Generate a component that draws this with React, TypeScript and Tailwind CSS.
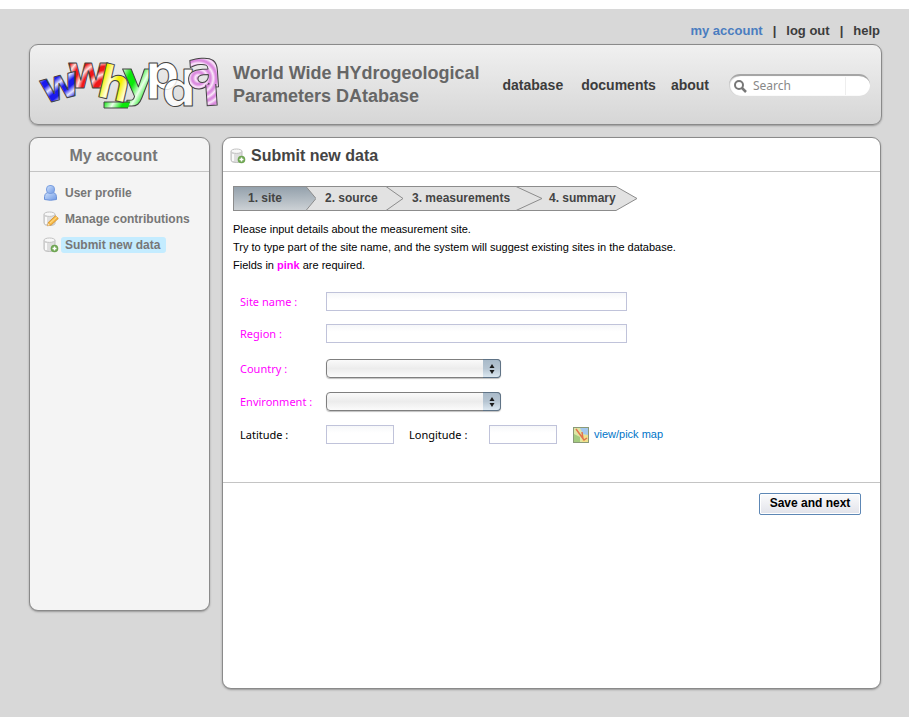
import type { ReactNode } from "react";

const sans = "font-['Liberation_Sans',Arial,sans-serif]";
const humanist = "font-['Noto_Sans','Open_Sans',sans-serif]";

function Logo() {
  const letter = {
    fontFamily: "'DejaVu Sans','Liberation Sans',sans-serif",
    fontWeight: 700,
    stroke: "#444",
    strokeWidth: 1,
    strokeLinejoin: "round" as const,
  };
  return (
    <svg width="182" height="54" viewBox="0 0 182 54" role="img" aria-label="wwhypda" className="shrink-0 overflow-visible">
      <defs>
        <linearGradient id="blue" gradientUnits="userSpaceOnUse" x1="0" y1="0" x2="3" y2="7" spreadMethod="reflect">
          <stop offset="0.3" stopColor="#1a1aee" />
          <stop offset="1" stopColor="#e8e8ff" />
        </linearGradient>
        <radialGradient id="red" gradientUnits="userSpaceOnUse" cx="40" cy="4" r="6" spreadMethod="reflect">
          <stop offset="0.3" stopColor="#f01818" />
          <stop offset="1" stopColor="#ffe4e4" />
        </radialGradient>
        <linearGradient id="yellow" gradientUnits="userSpaceOnUse" x1="0" y1="0" x2="9" y2="1" spreadMethod="reflect">
          <stop offset="0.2" stopColor="#f6f000" />
          <stop offset="1" stopColor="#ffffe0" />
        </linearGradient>
        <linearGradient id="green" gradientUnits="userSpaceOnUse" x1="0" y1="0" x2="11" y2="6" spreadMethod="reflect">
          <stop offset="0.3" stopColor="#0be80b" />
          <stop offset="1" stopColor="#eaffea" />
        </linearGradient>
        <radialGradient id="violet" gradientUnits="userSpaceOnUse" cx="12" cy="-10" r="3" spreadMethod="reflect">
          <stop offset="0.2" stopColor="#dc8ce0" />
          <stop offset="1" stopColor="#fbeafb" />
        </radialGradient>
      </defs>
      <text {...letter} fontSize="46" fill="url(#red)" transform="translate(29 30)">w</text>
      <text {...letter} fontSize="43" fill="url(#blue)" transform="translate(6 46) rotate(-15)">w</text>
      <text {...letter} fontSize="49" fill="url(#green)" transform="translate(84 38)">y</text>
      <path d="M90 50H66V44H92" fill="url(#green)" stroke="#444" />
      <text {...letter} fontSize="46" fill="url(#yellow)" transform="translate(57 38) rotate(13)">h</text>
      <text {...letter} fontSize="48" fill="#fff" transform="translate(107 31)">p</text>
      <text {...letter} fontSize="48" fill="#fff" fillOpacity="0.85" transform="translate(124 48)">d</text>
      <g transform="translate(149 31) rotate(-4)">
        <text {...letter} fontSize="53" fill="url(#violet)">a</text>
        <path d="M19 -3V18H29V-3" fill="url(#violet)" stroke="#444" />
      </g>
    </svg>
  );
}

function Drum({ badge }: { badge: "pencil" | "plus" }) {
  return (
    <svg width="16" height="16" viewBox="0 0 16 16" aria-hidden="true" className="shrink-0">
      <path d="M1 3.5V12.5Q1.500 14.500 6.500 14.500Q12 14.500 12 12.500V3.500Z" fill="#dedede" stroke="#bdbdbd" />
      <path d="M3 6V13" stroke="#fafafa" strokeWidth="2" />
      <ellipse cx="6.500" cy="3.200" rx="5.500" ry="2.200" fill="#f8f8f8" stroke="#c2c2c2" />
      {badge === "plus" ? (
        <>
          <circle cx="11.500" cy="11.500" r="3.800" fill="#6ea552" />
          <path d="M11.500 9.500V13.500M9.500 11.500H13.500" stroke="#fff" strokeWidth="1.500" />
        </>
      ) : (
        <>
          <path d="M4.500 14.800L5.500 11.200L12.500 4.800L15.300 7.500L8.200 14Z" fill="#f7b944" stroke="#cf8a2a" strokeWidth="0.800" />
          <path d="M7 12.200L13.800 6" stroke="#ffe39a" />
          <path d="M4.500 14.800L5.200 12.300L7 14.200Z" fill="#f8e3c0" />
        </>
      )}
    </svg>
  );
}

function UserIcon() {
  return (
    <svg width="16" height="16" viewBox="0 0 16 16" aria-hidden="true" className="shrink-0">
      <defs>
        <linearGradient id="person" x1="0" y1="0" x2="1" y2="1">
          <stop offset="0" stopColor="#cfe2fc" />
          <stop offset="1" stopColor="#6f98e4" />
        </linearGradient>
      </defs>
      <path d="M1.500 14.500Q1 8 5 7.500H10Q14 8 13.500 14.500Q7.500 16 1.500 14.500Z" fill="url(#person)" stroke="#6c92d8" />
      <rect x="3.500" y="0.500" width="8" height="8" rx="3.500" fill="url(#person)" stroke="#7b9fe0" />
    </svg>
  );
}

function MapIcon() {
  return (
    <svg width="16" height="16" viewBox="0 0 16 16" aria-hidden="true" className="shrink-0">
      <rect x="0.500" y="0.500" width="15" height="15" fill="#dfe6a4" stroke="#8a9a78" />
      <path d="M7 1H15V8L10 7Z" fill="#a3c8ee" />
      <path d="M1 7L7 10V15H1Z" fill="#a4cb80" />
      <path d="M9 9L15 8V15H9Z" fill="#efe08a" />
      <path d="M3 2L11 13L14 11M9 5L10 12" fill="none" stroke="#e2744c" strokeWidth="1.500" />
    </svg>
  );
}

const steps = [
  { label: "1. site", box: "w-[73px] pl-[14px]", tip: 10, active: true },
  { label: "2. source", box: "w-[70px] pl-[9px]", tip: 17 },
  { label: "3. measurements", box: "w-[113px] pl-[9px]", tip: 26 },
  { label: "4. summary", box: "w-[74px] pl-[7px]", tip: 21 },
];

function Steps() {
  return (
    <ol className="flex text-[12px] font-bold text-[#444]">
      {steps.map((step, i) => {
        const fill = step.active ? "url(#stepShade)" : "#e2e2e2";
        const last = i === steps.length - 1;
        return (
          <li key={step.label} aria-current={step.active ? "step" : undefined} className="flex h-[25px]">
            <span
              className={`border-y border-[#8c8c8c] leading-[22px] whitespace-nowrap ${step.box} ${
                step.active ? "border-l bg-linear-to-b from-[#94a1ac] to-[#ccd1d5]" : "bg-[#e2e2e2]"
              }`}
            >
              {step.label}
            </span>
            <svg width={step.tip} height="25" viewBox={`0 0 ${step.tip} 25`} aria-hidden="true" className="overflow-visible">
              <defs>
                <linearGradient id="stepShade" x1="0" y1="0" x2="0" y2="1">
                  <stop offset="0" stopColor="#94a1ac" />
                  <stop offset="1" stopColor="#ccd1d5" />
                </linearGradient>
              </defs>
              {!last && (
                <>
                  <rect width={step.tip} height="25" fill="#e2e2e2" />
                  <path d={`M0 0.500H${step.tip}M0 24.500H${step.tip}`} stroke="#8c8c8c" />
                </>
              )}
              <path d={`M0 0.500L${step.tip} 12.500L0 24.500`} fill={fill} stroke="#8c8c8c" />
            </svg>
          </li>
        );
      })}
    </ol>
  );
}

const panel = "rounded-[9px] border border-[#8a8a8a] shadow-[0_1px_2px_rgba(0,0,0,0.3)]";
const field = "border border-[#c0c3da] bg-linear-to-b from-[#f6f7f9] to-white to-40% px-1 outline-none";

function Row({ id, label, required, children }: { id: string; label: string; required?: boolean; children: ReactNode }) {
  return (
    <div className="flex items-center">
      <label htmlFor={id} className={`w-[86px] shrink-0 ${required ? "text-[#f0f]" : "text-black"}`}>
        {label}
      </label>
      {children}
    </div>
  );
}

function Picker({ id }: { id: string }) {
  return (
    <div className="relative h-[19px] w-[175px]">
      <select
        id={id}
        className="size-full appearance-none rounded-[4px] border border-[#7f7f7f] bg-linear-to-b from-[#fafafa] via-[#ececec] to-[#fbfbfb] px-2 shadow-[0_1px_1px_rgba(0,0,0,0.25)]"
      >
        <option value=""></option>
      </select>
      <span className="pointer-events-none absolute inset-y-0 right-0 flex w-[18px] items-center justify-center rounded-r-[4px] border border-l-0 border-[#5f7386] bg-linear-to-b from-[#a9bac9] via-[#b6c5d2] to-[#dce8f1]">
        <svg width="6" height="10" viewBox="0 0 6 10" aria-hidden="true">
          <path d="M3 0L5.500 4H0.500ZM3 10L0.500 6H5.500Z" fill="#1b1b1b" />
        </svg>
      </span>
    </div>
  );
}

export default function App() {
  return (
    <div className={`min-h-screen border-t-[9px] border-white bg-[#d8d8d8] pr-[27px] pb-7 pl-[29px] text-black ${sans}`}>
      <nav aria-label="Account" className="flex h-[35px] items-center justify-end gap-[10px] pt-[8px] pr-[2px] text-[13px] font-bold text-[#3c3c3c]">
        <a href="#account" className="text-[#4a7dc0]">my account</a>
        <span>|</span>
        <a href="#logout">log out</a>
        <span>|</span>
        <a href="#help">help</a>
      </nav>

      <header className={`flex h-[81px] items-center bg-linear-to-b from-[#f0f0f0] to-[#d6d6d6] pr-[11px] pl-[8px] ${panel}`}>
        <Logo />
        <h1 className="ml-[13px] text-[18px] leading-[23px] font-bold whitespace-nowrap text-[#666]">
          World Wide HYdrogeological
          <br />
          Parameters DAtabase
        </h1>
        <div className="ml-auto flex items-center pt-px">
          <nav aria-label="Main" className="flex text-[14px] font-bold text-[#3c3c3c]">
            <a href="#database" className="mr-[18px]">database</a>
            <a href="#documents" className="mr-[15px]">documents</a>
            <a href="#about" className="mr-5">about</a>
          </nav>
          <form role="search" className="flex h-[22px] w-[141px] items-center rounded-full border-t-2 border-[#a5a5a5] bg-white pl-[5px] shadow-[inset_1px_0_1px_rgba(0,0,0,0.2)]">
            <svg width="13" height="13" viewBox="0 0 13 13" aria-hidden="true" className="shrink-0">
              <circle cx="5" cy="5" r="4" fill="none" stroke="#777" strokeWidth="2" />
              <path d="M8 8L12 12" stroke="#777" strokeWidth="2.500" />
            </svg>
            <input
              type="search"
              aria-label="Search"
              placeholder="Search"
              className={`ml-[6px] w-[93px] border-r border-[#eee] text-[12px] outline-none placeholder:text-[#888] ${humanist}`}
            />
          </form>
        </div>
      </header>

      <div className="mt-3 mr-px flex items-start gap-3">
        <aside className={`min-h-[474px] w-[181px] shrink-0 bg-[#f4f4f4] ${panel}`}>
          <h2 className="flex h-[34px] items-center justify-center border-b border-[#c4c4c4] pt-[2px] pr-3 text-[16px] font-bold text-[#777]">
            My account
          </h2>
          <ul className="flex flex-col gap-[10px] pt-[13px] pl-[13px] text-[12px] leading-[16px] font-bold text-[#777]">
            <li>
              <a href="#profile" className="flex items-center gap-[2px]">
                <UserIcon />
                <span className="px-[4px]">User profile</span>
              </a>
            </li>
            <li>
              <a href="#contributions" className="flex items-center gap-[2px]">
                <Drum badge="pencil" />
                <span className="px-[4px] whitespace-nowrap">Manage contributions</span>
              </a>
            </li>
            <li>
              <a href="#submit" aria-current="page" className="flex items-center gap-[2px]">
                <Drum badge="plus" />
                <span className="rounded-[3px] bg-[#c4ecff] pr-[6px] pl-[4px]">Submit new data</span>
              </a>
            </li>
          </ul>
        </aside>

        <main className={`min-h-[552px] min-w-0 flex-1 bg-white ${panel}`}>
          <h2 className="flex h-[34px] items-center gap-[5px] border-b border-[#c4c4c4] pt-[2px] pl-[7px] text-[16px] font-bold text-[#444]">
            <Drum badge="plus" />
            Submit new data
          </h2>
          <form>
            <div className="h-[311px] border-b border-[#c4c4c4] pt-[14px] pl-[10px]">
              <Steps />
              <div className="mt-[9px] text-[11px] leading-[18px]">
                <p>Please input details about the measurement site.</p>
                <p>Try to type part of the site name, and the system will suggest existing sites in the database.</p>
                <p>
                  Fields in <strong className="text-[#f0f]">pink</strong> are required.
                </p>
              </div>
              <div className={`mt-[18px] flex flex-col gap-[13px] pl-[7px] text-[11px] leading-[19px] ${humanist}`}>
                <Row id="site" label="Site name :" required>
                  <input id="site" type="text" required className={`h-[19px] w-[301px] ${field}`} />
                </Row>
                <Row id="region" label="Region :" required>
                  <input id="region" type="text" required className={`h-[19px] w-[301px] ${field}`} />
                </Row>
                <div className="mt-[3px] flex flex-col gap-[14px]">
                  <Row id="country" label="Country :" required>
                    <Picker id="country" />
                  </Row>
                  <Row id="environment" label="Environment :" required>
                    <Picker id="environment" />
                  </Row>
                  <Row id="latitude" label="Latitude :">
                    <input id="latitude" type="text" className={`h-[19px] w-[68px] ${field}`} />
                    <label htmlFor="longitude" className="ml-[15px] w-[80px]">Longitude :</label>
                    <input id="longitude" type="text" className={`h-[19px] w-[68px] ${field}`} />
                    <a href="#map" className={`ml-4 flex items-center gap-[5px] text-[#0074c8] ${sans}`}>
                      <MapIcon />
                      view/pick map
                    </a>
                  </Row>
                </div>
              </div>
            </div>
            <div className="flex justify-end pt-[10px] pr-[19px]">
              <button
                type="button"
                className="h-[22px] w-[102px] rounded-[2px] border border-[#5d87b5] bg-linear-to-b from-[#fbfbfc] to-[#e2e3ea] pb-[2px] text-[12px] font-bold whitespace-nowrap shadow-[inset_0_0_0_1px_#fff]"
              >
                Save and next
              </button>
            </div>
          </form>
        </main>
      </div>
    </div>
  );
}
